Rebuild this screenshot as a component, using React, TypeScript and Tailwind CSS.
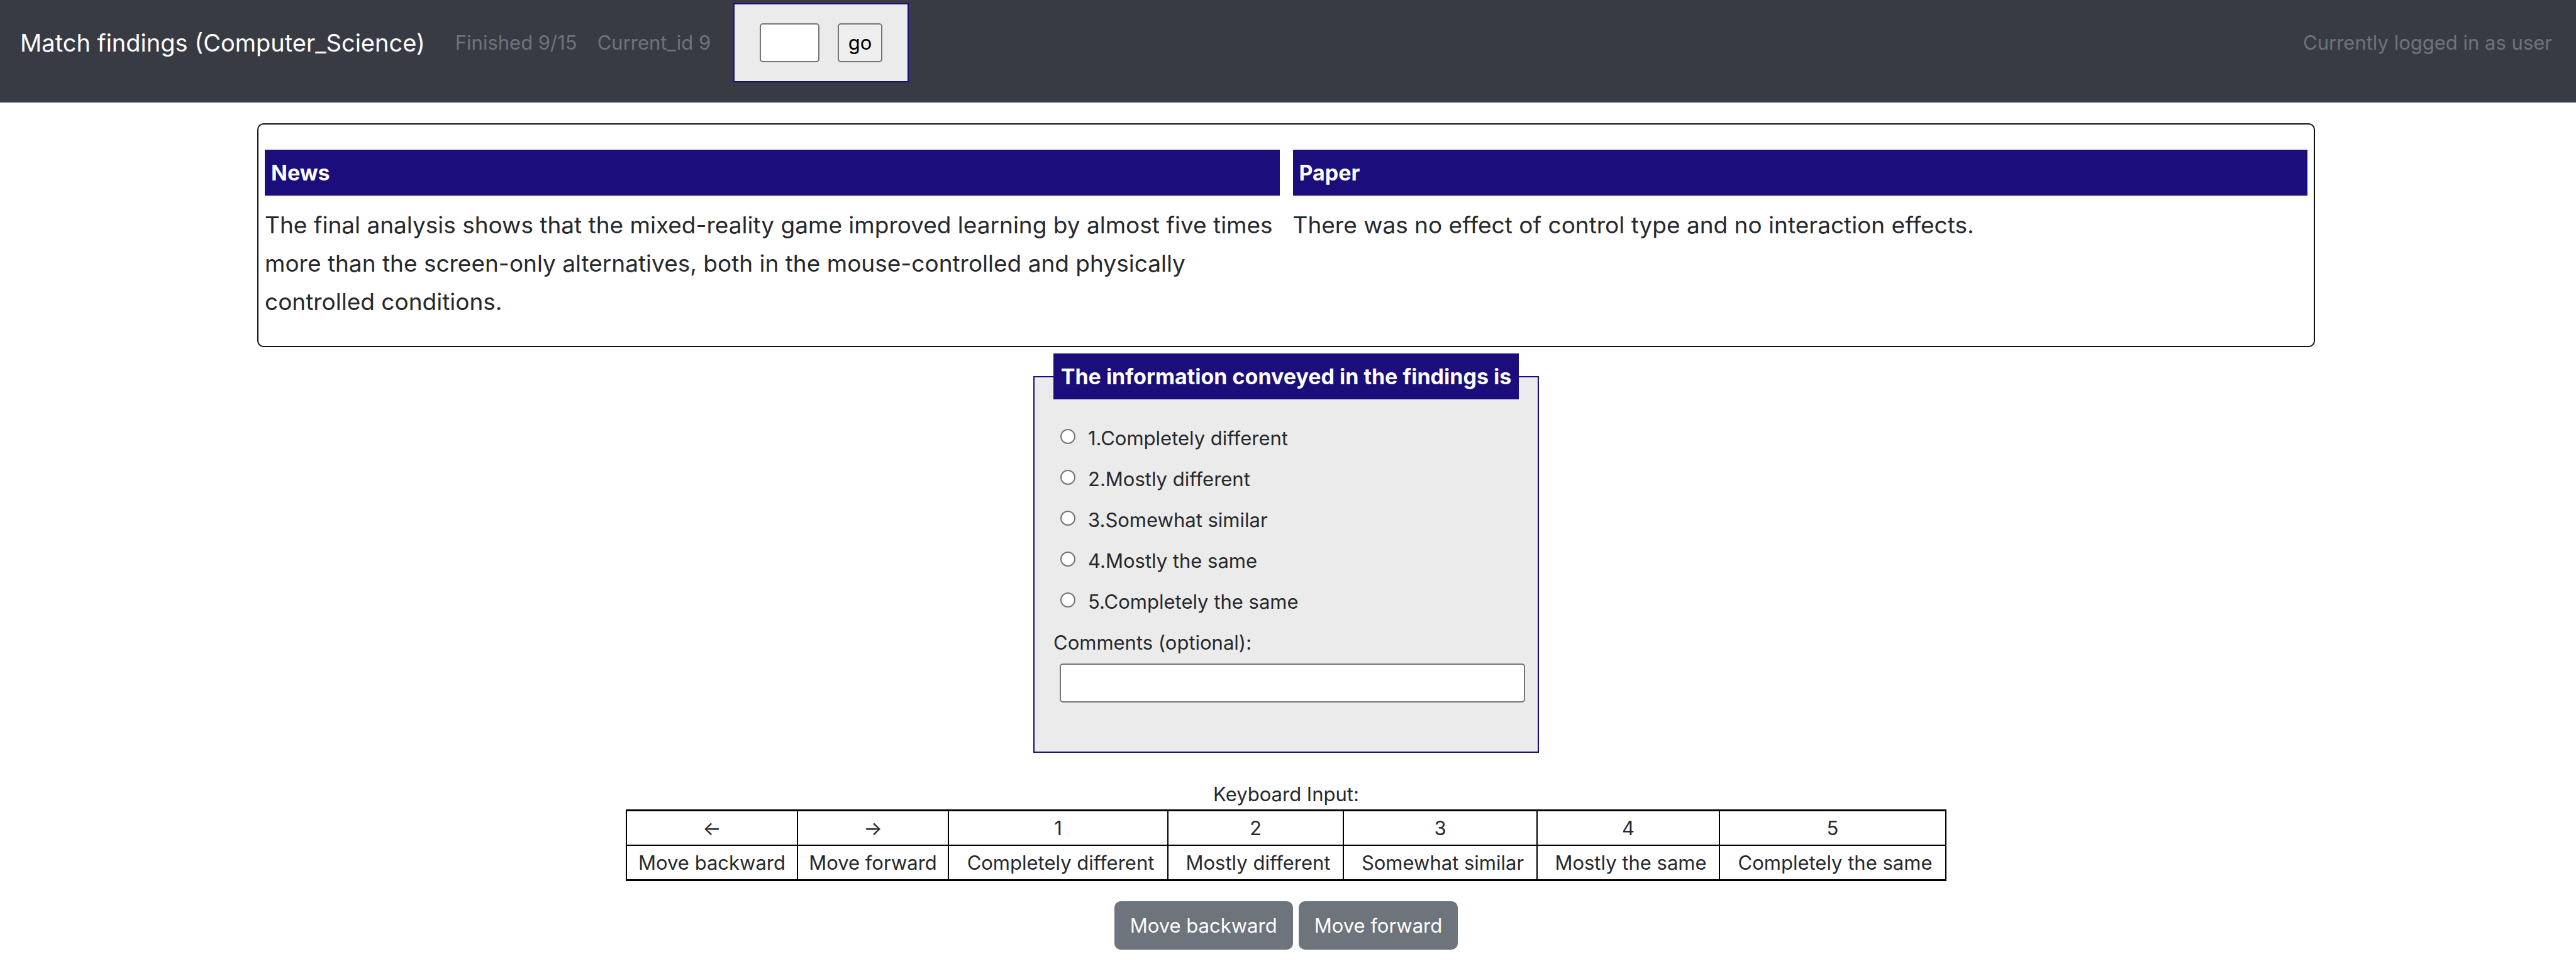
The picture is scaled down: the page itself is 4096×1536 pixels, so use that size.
const OPTIONS = [
  "Completely different",
  "Mostly different",
  "Somewhat similar",
  "Mostly the same",
  "Completely the same",
];

const BUTTON =
  "cursor-pointer rounded-[10px] bg-[#6d747b] px-[25px] py-3.5 leading-[49px] text-white";

function Navbar() {
  return (
    <nav className="flex items-center bg-[#393b44] pt-[5px] pr-[38px] pb-8 pl-8 text-[#6d747b]">
      <a href="#" className="mr-12 text-[38px] leading-[60px] text-white">
        Match findings (Computer_Science)
      </a>
      <div className="flex items-center gap-8 leading-[48px]">
        <span>Finished 9/15</span>
        <span>Current_id 9</span>
        <form
          className="ml-1 flex gap-[29px] border-2 border-[#1b0e7c] bg-[#ebebeb] px-10 py-[30px]"
          onSubmit={(e) => e.preventDefault()}
        >
          <input
            type="text"
            aria-label="Go to id"
            className="h-[62px] w-[95px] rounded-[5px] border-2 border-[#767676] bg-white px-1 text-black"
          />
          <button
            type="submit"
            className="h-[62px] w-[71px] cursor-pointer rounded-[5px] border-2 border-[#767676] bg-[#efefef] text-black"
          >
            go
          </button>
        </form>
      </div>
      <span className="ml-auto leading-[48px]">Currently logged in as user</span>
    </nav>
  );
}

function Finding({ title, text }: { title: string; text: string }) {
  return (
    <section className="flex-1">
      <h2 className="bg-[#1b0e7c] px-2.5 text-[34px] leading-[73px] font-bold text-white">
        {title}
      </h2>
      <p className="mt-4 text-[37px] leading-[61px]">{text}</p>
    </section>
  );
}

function Question() {
  return (
    <fieldset className="mx-auto mt-2.5 w-[804px] border-2 border-[#1b0e7c] bg-[#ebebeb] px-[30px] pb-[78px]">
      <legend className="w-full bg-[#1b0e7c] text-center text-[34px] leading-[73px] font-bold whitespace-nowrap text-white">
        The information conveyed in the findings is
      </legend>
      <div className="mt-[37px]">
        {OPTIONS.map((option, i) => (
          <label key={option} className="mb-4 ml-[11px] flex gap-5 leading-[49px]">
            <input
              type="radio"
              name="similarity"
              value={i + 1}
              className="mt-2.5 size-6 appearance-none rounded-full border-2 border-[#767676] bg-white checked:bg-[#1b0e7c]"
            />
            <span>
              {i + 1}.{option}
            </span>
          </label>
        ))}
      </div>
      <label htmlFor="comments" className="block leading-[49px]">
        Comments (optional):
      </label>
      <input
        id="comments"
        type="text"
        className="mt-[9px] ml-2.5 block h-[62px] w-full rounded-[5px] border-2 border-[#767676] bg-white px-1"
      />
    </fieldset>
  );
}

function KeyboardTable() {
  return (
    <table className="mx-auto mt-[41px] w-[2098px] table-fixed border-collapse border-x-2 border-y-3 border-black text-center leading-[49px]">
      <caption>Keyboard Input:</caption>
      <colgroup>
        <col className="w-[272px]" />
        <col className="w-[240px]" />
        <col className="w-[349px]" />
        <col className="w-[279px]" />
        <col className="w-[308px]" />
        <col className="w-[290px]" />
        <col className="w-[360px]" />
      </colgroup>
      <tbody>
        <tr>
          <td className="border-2 border-black py-0.5">←</td>
          <td className="border-2 border-black py-0.5">→</td>
          {OPTIONS.map((option, i) => (
            <td key={option} className="border-2 border-black py-0.5">
              {i + 1}
            </td>
          ))}
        </tr>
        <tr>
          <td className="border-2 border-black py-0.5">Move backward</td>
          <td className="border-2 border-black py-0.5">Move forward</td>
          {OPTIONS.map((option) => (
            <td key={option} className="border-2 border-black py-0.5 pl-2 whitespace-nowrap">
              {option}
            </td>
          ))}
        </tr>
      </tbody>
    </table>
  );
}

export default function App() {
  return (
    <div className="min-h-screen bg-white font-[Inter,'Liberation_Sans',sans-serif] text-[31px] text-[#26282c]">
      <Navbar />
      <main className="mr-1.5">
        <div className="mx-auto mt-[33px] flex w-4/5 gap-[21px] rounded-[10px] border-2 border-[#111111] px-2.5 py-10">
          <Finding
            title="News"
            text="The final analysis shows that the mixed-reality game improved learning by almost five times more than the screen-only alternatives, both in the mouse-controlled and physically controlled conditions."
          />
          <Finding
            title="Paper"
            text="There was no effect of control type and no interaction effects."
          />
        </div>
        <Question />
        <KeyboardTable />
        <div className="mt-8 flex justify-center gap-[9px]">
          <button type="button" className={BUTTON}>
            Move backward
          </button>
          <button type="button" className={BUTTON}>
            Move forward
          </button>
        </div>
      </main>
    </div>
  );
}
